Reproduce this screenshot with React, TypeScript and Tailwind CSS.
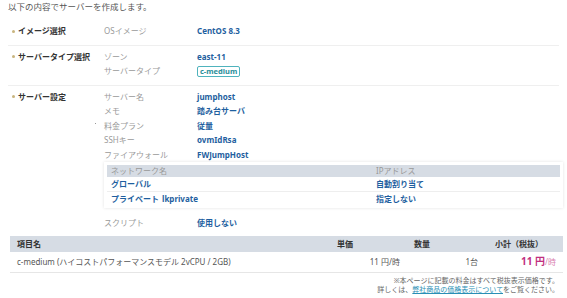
import React from "react";

const rows3 = [
  { k: "サーバー名", v: "jumphost" },
  { k: "メモ", v: "踏み台サーバ" },
  { k: "料金プラン", v: "従量", dot: true },
  { k: "SSHキー", v: "ovmIdRsa" },
  { k: "ファイアウォール", v: "FWJumpHost" },
];

export default function App() {
  return (
    <div className="h-[298px] w-[567px] overflow-hidden bg-white px-[8px] font-['Noto_Sans','Noto_Sans_CJK_JP',sans-serif] text-[8px] text-[#333]">
      <p className="flex h-[14px] items-center text-[8.5px] text-[#555]">以下の内容でサーバーを作成します。</p>

      <div className="mt-[6px] flex border-b border-[#efefef] pt-[4px] pb-[6px]">
        <SectionTitle>イメージ選択</SectionTitle>
        <div className="flex-1">
          <Row k="OSイメージ">CentOS 8.3</Row>
        </div>
      </div>

      <div className="flex border-b border-[#efefef] pt-[4px] pb-[6px]">
        <SectionTitle>サーバータイプ選択</SectionTitle>
        <div className="flex-1">
          <Row k="ゾーン">east-11</Row>
          <Row k="サーバータイプ">
            <span className="mt-[1px] rounded-[2px] border border-[#4fb3bd] px-[2px] text-[7.5px] leading-[9px] text-[#2b8e9a]">c-medium</span>
          </Row>
        </div>
      </div>

      <div className="flex pt-[4px]">
        <SectionTitle>サーバー設定</SectionTitle>
        <div className="flex-1">
          {rows3.map((r) => (
            <Row key={r.k} k={r.k} dot={r.dot}>
              {r.v}
            </Row>
          ))}
          <div className="mr-[-4px] bg-white p-[3px] shadow-[0_0_3px_rgba(0,0,0,0.12)]">
            <div className="flex h-[12px] items-center bg-[#d6dce4] text-[#999]">
              <span className="w-[269px] pl-[4px]">ネットワーク名</span>
              <span>IPアドレス</span>
            </div>
            <div className="flex h-[14px] items-center font-bold text-[#1f5fa0]">
              <span className="w-[269px] pl-[4px]">グローバル</span>
              <span>自動割り当て</span>
            </div>
            <div className="flex h-[14px] items-center border-t border-[#eee] font-bold text-[#1f5fa0]">
              <span className="w-[55px] pl-[4px]">プライベート</span>
              <span className="w-[214px]">lkprivate</span>
              <span>指定しない</span>
            </div>
          </div>
          <div className="mt-[8px]">
            <Row k="スクリプト">使用しない</Row>
          </div>
        </div>
      </div>

      <div className="mt-[5px] mr-[-4px] ml-[2px]">
        <div className="flex h-[16px] items-center bg-[#d6dce4] font-bold text-[#333]">
          <span className="w-[312px] pl-[7px]">項目名</span>
          <span className="w-[78px] pl-[15px]">単価</span>
          <span className="w-[78px] pl-[14px]">数量</span>
          <span className="w-[78px] pl-[17px]">小計（税抜）</span>
        </div>
        <div className="flex h-[21px] items-center border-b border-[#e6e6e6] text-[#555]">
          <span className="w-[312px] pl-[7px]">c-medium (ハイコストパフォーマンスモデル 2vCPU / 2GB)</span>
          <span className="w-[78px] text-right">11 円/時</span>
          <span className="w-[78px] text-right">1台</span>
          <span className="w-[78px] text-right text-[#c2307f]">
            <span className="text-[10px] font-bold">11 円</span>
            <span className="text-[#d982b0]">/時</span>
          </span>
        </div>
      </div>

      <div className="mt-[3px] text-right text-[7px] leading-[9px] text-[#666]">
        <p>※本ページに記載の料金はすべて税抜表示価格です。</p>
        <p>
          詳しくは、<span className="text-[#2a8fb5] underline">弊社商品の価格表示について</span>をご覧ください。
        </p>
      </div>
    </div>
  );
}

function SectionTitle({ children }: { children: React.ReactNode }) {
  return (
    <div className="w-[96px] shrink-0">
      <div className="flex h-[14.5px] items-center gap-[3px] pl-[4px] font-bold text-[#333]">
        <span className="h-[3px] w-[3px] rounded-full bg-[#c9b57f]" />
        {children}
      </div>
    </div>
  );
}

function Row({ k, children, dot }: { k: string; children: React.ReactNode; dot?: boolean }) {
  return (
    <div className="relative flex h-[14.5px] items-center">
      {dot && <span className="absolute left-[-9px] top-[4px] h-[1px] w-[1px] bg-[#999]" />}
      <span className="w-[93px] shrink-0 text-[#9a9a9a]">{k}</span>
      <span className="flex font-bold text-[#1f5fa0]">{children}</span>
    </div>
  );
}
